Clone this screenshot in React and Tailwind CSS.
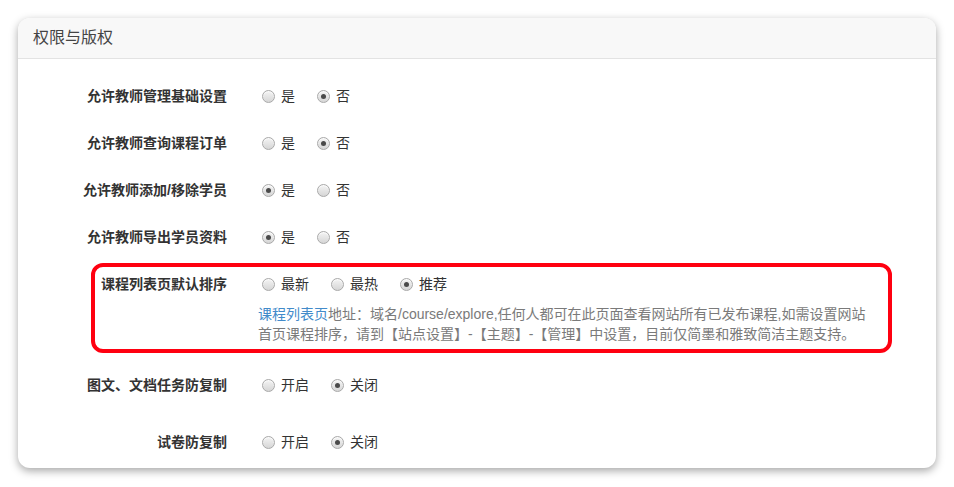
import React from "react";

const FONT = { fontFamily: '"Liberation Sans", "Noto Sans CJK SC", sans-serif' };

function Radio({ checked }) {
  return (
    <span className="relative flex h-[13px] w-[13px] shrink-0 items-center justify-center rounded-full border border-[#a9a9a9] bg-gradient-to-b from-[#f4f4f4] to-[#d6d6d6] shadow-[inset_0_1px_1px_rgba(255,255,255,0.8)]">
      {checked && <span className="h-[5px] w-[5px] rounded-full bg-[#4a4a4a]" />}
    </span>
  );
}

function Options({ items, value }) {
  return (
    <div className="flex items-center gap-[18px]">
      {items.map((t) => (
        <div key={t} className="flex items-center pl-[4px]">
          <Radio checked={t === value} />
          <span className="ml-[6px] text-[14px] leading-[20px] text-[#333]">{t}</span>
        </div>
      ))}
    </div>
  );
}

function Row({ label, items, value, labelW = "w-[209px]", className = "" }) {
  return (
    <div className={"flex h-[32px] items-center " + className}>
      <div className={labelW + " shrink-0 text-right text-[14px] font-bold leading-[20px] text-[#333]"}>
        {label}
      </div>
      <div className="ml-[31px]">
        <Options items={items} value={value} />
      </div>
    </div>
  );
}

export default function App() {
  const yn = ["是", "否"];
  const oc = ["开启", "关闭"];
  return (
    <div className="min-h-[487px] w-[954px] bg-white pt-[18px]" style={FONT}>
      <div className="ml-[18px] w-[918px] overflow-hidden rounded-[12px] bg-white shadow-[0_3px_9px_rgba(0,0,0,0.35)]">
        <div className="flex h-[41px] items-center border-b border-[#e3e3e3] bg-[#f8f8f8] pl-[15px]">
          <span className="text-[16px] leading-[20px] text-[#444]">权限与版权</span>
        </div>
        <div className="pb-[10px] pt-[21px]">
          <Row label="允许教师管理基础设置" items={yn} value="否" className="mb-[15px]" />
          <Row label="允许教师查询课程订单" items={yn} value="否" className="mb-[15px]" />
          <Row label="允许教师添加/移除学员" items={yn} value="是" className="mb-[15px]" />
          <Row label="允许教师导出学员资料" items={yn} value="是" />
          <div className="ml-[73px] mt-[10px] w-[801px] rounded-[12px] border-4 border-[#ff0010] pb-[5px] pt-[1px]">
            <Row label="课程列表页默认排序" items={["最新", "最热", "推荐"]} value="推荐" labelW="w-[132px]" />
            <div className="ml-[163px] mt-[4px] whitespace-nowrap text-[14px] leading-[20px] text-[#7a7a7a]">
              <span className="text-[#428bca]">课程列表页</span>地址：域名/course/explore,任何人都可在此页面查看网站所有已发布课程,如需设置网站
              <br />
              首页课程排序，请到【站点设置】-【主题】-【管理】中设置，目前仅简墨和雅致简洁主题支持。
            </div>
          </div>
          <Row label="图文、文档任务防复制" items={oc} value="关闭" className="mt-[16px]" />
          <Row label="试卷防复制" items={oc} value="关闭" className="mt-[25px]" />
        </div>
      </div>
    </div>
  );
}
